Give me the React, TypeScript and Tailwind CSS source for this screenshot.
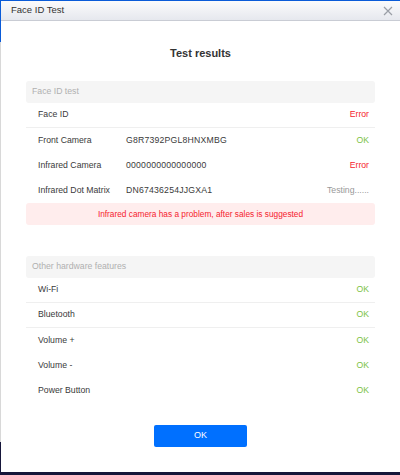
import React from "react";

type Row = { label: string; value?: string; status: string; kind: "err" | "ok" | "test"; border?: boolean };

const faceRows: Row[] = [
  { label: "Face ID", status: "Error", kind: "err", border: true },
  { label: "Front Camera", value: "G8R7392PGL8HNXMBG", status: "OK", kind: "ok" },
  { label: "Infrared Camera", value: "0000000000000000", status: "Error", kind: "err" },
  { label: "Infrared Dot Matrix", value: "DN67436254JJGXA1", status: "Testing......", kind: "test" },
];

const hwRows: Row[] = [
  { label: "Wi-Fi", status: "OK", kind: "ok", border: true },
  { label: "Bluetooth", status: "OK", kind: "ok", border: true },
  { label: "Volume +", status: "OK", kind: "ok" },
  { label: "Volume -", status: "OK", kind: "ok" },
  { label: "Power Button", status: "OK", kind: "ok" },
];

function RowView({ r }: { r: Row }) {
  const color =
    r.kind === "err" ? "text-[#f5222d]" : r.kind === "ok" ? "text-[#7cc242]" : "text-[#999999]";
  return (
    <div
      className={`flex items-center h-[25px] pl-[12px] pr-[6px] ${r.border ? "border-b border-[#efefef]" : ""}`}
    >
      <div className="w-[88px] text-[#3a3a3a] text-[8.7px]">{r.label}</div>
      <div className="flex-1 text-[#3a3a3a] text-[8.7px] tracking-[0.2px]">{r.value ?? ""}</div>
      <div className={`${color} text-[8.7px]`}>{r.status}</div>
    </div>
  );
}

export default function App() {
  return (
    <div
      className="w-[400px] h-[475px] flex flex-col bg-[#16163a] text-[9px]"
      style={{ fontFamily: "'Liberation Sans', Arial, sans-serif" }}
    >
      <div className="h-[1px] bg-[#0a5bd8]" />
      <div className="flex flex-1">
        <div className="w-[1px] flex flex-col">
          <div className="h-[41px] bg-[#0a5bd8]" />
          <div className="flex-1 bg-[#d8d8d8]" />
          <div className="h-[30px] bg-[#16163a]" />
        </div>
        <div className="flex-1 flex flex-col bg-white">
          <div className="h-[20px] flex items-center justify-between pl-[10px] pr-[6px] bg-gradient-to-b from-[#fbfbfc] to-[#e6e8ee] border-b border-[#c9ccd4]">
            <span className="text-[9.5px] text-[#333]">Face ID Test</span>
            <svg width="10" height="10" viewBox="0 0 10 10" className="mr-[1px]">
              <path d="M1 1L9 9M9 1L1 9" stroke="#9a9ea6" strokeWidth="1.2" />
            </svg>
          </div>
          <div className="pt-[24px] leading-[16px] text-center text-[11px] font-bold text-[#333]">Test results</div>
          <div className="px-[25px] pt-[20px]">
            <div className="h-[22px] rounded-[3px] bg-[#f5f5f5] flex items-center pl-[6px] text-[#b0b0b0] text-[8.7px]">
              Face ID test
            </div>
            {faceRows.map((r) => (
              <RowView key={r.label} r={r} />
            ))}
            <div className="h-[22px] rounded-[3px] bg-[#ffeded] flex items-center justify-center text-[#f5222d] text-[8.3px]">
              Infrared camera has a problem, after sales is suggested
            </div>
            <div className="h-[31px]" />
            <div className="h-[22px] rounded-[3px] bg-[#f5f5f5] flex items-center pl-[6px] text-[#b0b0b0] text-[8.7px]">
              Other hardware features
            </div>
            {hwRows.map((r) => (
              <RowView key={r.label} r={r} />
            ))}
            <div className="flex justify-center pt-[22px]">
              <button className="w-[93px] h-[22px] rounded-[2px] bg-[#0070ff] text-white text-[9px]">OK</button>
            </div>
          </div>
        </div>
      </div>
      <div className="h-[3px] bg-[#16163a]" />
    </div>
  );
}
